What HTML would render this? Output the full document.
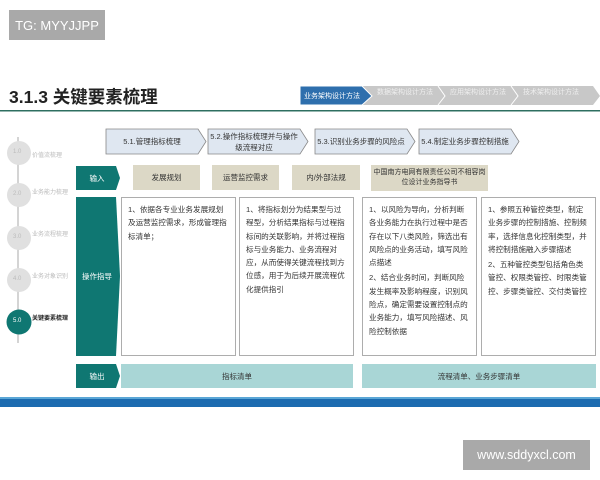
<!DOCTYPE html>
<html><head><meta charset="utf-8"><style>
*{margin:0;padding:0;box-sizing:border-box}
body{width:600px;height:480px;background:#fff;position:relative;overflow:hidden;font-family:"Liberation Sans","Noto Sans CJK SC",sans-serif;color:#333}
.a{position:absolute}
.t{font-size:7.6px;line-height:13.3px;padding:5px 6px;color:#333}
.c{display:flex;align-items:center;justify-content:center;text-align:center}
</style></head><body>
<div class="a c" style="left:9px;top:10px;width:96px;height:30px;background:#a9a9a9;color:#fff;font-size:13px">TG: MYYJJPP</div>
<div class="a" style="left:9px;top:84px;font-size:17.5px;font-weight:bold;color:#222">3.1.3 关键要素梳理</div>
<svg class="a" style="left:0;top:0" width="600" height="480">
<polygon points="362,86 593,86 600,96 593,105 362,105" fill="#c8c8c8"/>
<polyline points="438,86 445,96 438,105" fill="none" stroke="#fff" stroke-width="1"/>
<polyline points="511,86 518,96 511,105" fill="none" stroke="#fff" stroke-width="1"/>
<polygon points="300,86 362,86 372,96 362,105 300,105" fill="#2e6fad" stroke="#fff" stroke-width="1"/>
<rect x="0" y="110" width="600" height="1.5" fill="#2e6f60"/>
<g fill="#dfe7f1" stroke="#888" stroke-width="0.8">
<polygon points="106,129 198,129 206,141.5 198,154 106,154"/>
<polygon points="208,129 300,129 308,141.5 300,154 208,154"/>
<polygon points="315,129 407,129 415,141.5 407,154 315,154"/>
<polygon points="419,129 511,129 519,141.5 511,154 419,154"/>
</g>
<line x1="18" y1="137" x2="18" y2="343" stroke="#aaa" stroke-width="1"/>
<g fill="#e0e0e0"><circle cx="19" cy="153" r="12"/><circle cx="19" cy="195" r="12"/><circle cx="19" cy="238" r="12"/><circle cx="19" cy="280" r="12"/></g>
<circle cx="19" cy="322" r="12.5" fill="#0f7772"/>
<g fill="#0f7772">
<polygon points="76,166 116,166 120,178 116,190 76,190"/>
<polygon points="76,197 116,197 120,276 116,356 76,356"/>
<polygon points="76,364 116,364 120,376 116,388 76,388"/>
</g>
<g fill="#dcd8c6"><rect x="133" y="165" width="67" height="25"/><rect x="212" y="165" width="67" height="25"/><rect x="292" y="165" width="68" height="25"/><rect x="371" y="165" width="117" height="26"/></g>
<g fill="#fff" stroke="#999" stroke-width="0.8"><rect x="121.5" y="197.5" width="114" height="158"/><rect x="239.5" y="197.5" width="114" height="158"/><rect x="362.5" y="197.5" width="114" height="158"/><rect x="481.5" y="197.5" width="114" height="158"/></g>
<g fill="#a9d6d6"><rect x="121" y="364" width="232" height="24"/><rect x="362" y="364" width="234" height="24"/></g>
<rect x="0" y="397" width="600" height="2" fill="#5aa6d6"/>
<rect x="0" y="399" width="600" height="8" fill="#1c6bb0"/>
<rect x="463" y="440" width="127" height="30" fill="#a9a9a9"/>
</svg>
<div class="a" style="left:300px;top:91px;width:64px;font-size:7px;color:#fff;text-align:center">业务架构设计方法</div>
<div class="a" style="left:375px;top:88px;width:60px;font-size:7px;color:#eee;text-align:center;line-height:10px">数据架构设计方法</div>
<div class="a" style="left:448px;top:88px;width:60px;font-size:7px;color:#eee;text-align:center;line-height:10px">应用架构设计方法</div>
<div class="a" style="left:521px;top:88px;width:60px;font-size:7px;color:#eee;text-align:center;line-height:10px">技术架构设计方法</div>
<div class="a c" style="left:106px;top:129px;width:92px;height:25px;font-size:7.5px">5.1.管理指标梳理</div>
<div class="a c" style="left:208px;top:129px;width:92px;height:25px;font-size:7.5px;line-height:11px">5.2.操作指标梳理并与操作级流程对应</div>
<div class="a c" style="left:315px;top:129px;width:92px;height:25px;font-size:7.5px">5.3.识别业务步骤的风险点</div>
<div class="a c" style="left:419px;top:129px;width:92px;height:25px;font-size:7.5px">5.4.制定业务步骤控制措施</div>
<div class="a" style="left:13px;top:149px;font-size:6px;color:#bbb">1.0</div>
<div class="a" style="left:32px;top:150px;font-size:6px;color:#bbb">价值流梳理</div>
<div class="a" style="left:13px;top:191px;font-size:6px;color:#bbb">2.0</div>
<div class="a" style="left:13px;top:234px;font-size:6px;color:#bbb">3.0</div>
<div class="a" style="left:13px;top:276px;font-size:6px;color:#bbb">4.0</div>
<div class="a" style="left:13px;top:318px;font-size:6px;color:#fff">5.0</div>
<div class="a" style="left:32px;top:189px;width:36px;font-size:6px;color:#bbb;text-align:center;line-height:8px">业务能力梳理</div>
<div class="a" style="left:32px;top:231px;width:36px;font-size:6px;color:#bbb;text-align:center;line-height:8px">业务流程梳理</div>
<div class="a" style="left:32px;top:273px;width:36px;font-size:6px;color:#bbb;text-align:center;line-height:8px">业务对象识别</div>
<div class="a" style="left:32px;top:315px;width:36px;font-size:6px;color:#222;font-weight:bold;text-align:center;line-height:8px">关键要素梳理</div>
<div class="a c" style="left:76px;top:166px;width:42px;height:24px;font-size:7.5px;color:#fff">输入</div>
<div class="a c" style="left:76px;top:197px;width:42px;height:159px;font-size:7.5px;color:#fff">操作指导</div>
<div class="a c" style="left:76px;top:364px;width:42px;height:24px;font-size:7.5px;color:#fff">输出</div>
<div class="a c" style="left:133px;top:165px;width:67px;height:25px;font-size:7.5px">发展规划</div>
<div class="a c" style="left:212px;top:165px;width:67px;height:25px;font-size:7.5px">运营监控需求</div>
<div class="a c" style="left:292px;top:165px;width:68px;height:25px;font-size:7.5px">内/外部法规</div>
<div class="a c" style="left:371px;top:165px;width:117px;height:26px;font-size:7px;line-height:10px">中国南方电网有限责任公司不相容岗位设计业务指导书</div>
<div class="a t" style="left:122px;top:198px;width:113px">1、依据各专业业务发展规划及运营监控需求，形成管理指标清单；</div>
<div class="a t" style="left:240px;top:198px;width:113px">1、将指标划分为结果型与过程型，分析结果指标与过程指标间的关联影响，并将过程指标与业务能力、业务流程对应，从而使得关键流程找到方位感，用于为后续开展流程优化提供指引</div>
<div class="a t" style="left:363px;top:198px;width:113px">1、以风险为导向，分析判断各业务能力在执行过程中是否存在以下八类风险，筛选出有风险点的业务活动，填写风险点描述<div style="height:2px"></div>2、结合业务时间，判断风险发生概率及影响程度，识别风险点，确定需要设置控制点的业务能力，填写风险描述、风险控制依据</div>
<div class="a t" style="left:482px;top:198px;width:113px">1、参照五种管控类型，制定业务步骤的控制措施、控制频率，选择信息化控制类型，并将控制措施融入步骤描述<div style="height:2px"></div>2、五种管控类型包括角色类管控、权限类管控、时限类管控、步骤类管控、交付类管控</div>
<div class="a c" style="left:121px;top:364px;width:232px;height:24px;font-size:7.5px">指标清单</div>
<div class="a c" style="left:362px;top:364px;width:234px;height:24px;font-size:7.5px">流程清单、业务步骤清单</div>
<div class="a c" style="left:463px;top:440px;width:127px;height:30px;font-size:12.5px;color:#fff">www.sddyxcl.com</div>
</body></html>
